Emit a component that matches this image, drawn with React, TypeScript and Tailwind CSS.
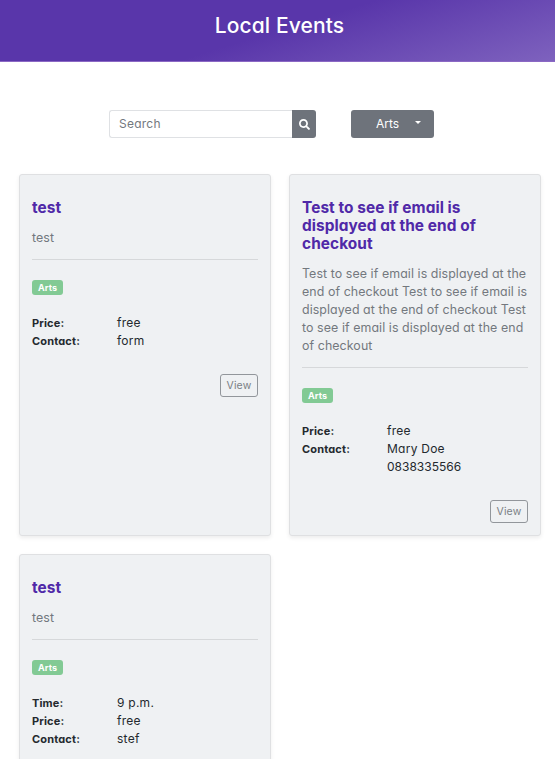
import React from "react";

type Row = { label: string; values: string[] };
type EventItem = { title: string[]; text: string[]; rows: Row[] };

const events: EventItem[] = [
  {
    title: ["test"],
    text: ["test"],
    rows: [
      { label: "Price:", values: ["free"] },
      { label: "Contact:", values: ["form"] },
    ],
  },
  {
    title: ["Test to see if email is", "displayed at the end of", "checkout"],
    text: [
      "Test to see if email is displayed at the",
      "end of checkout Test to see if email is",
      "displayed at the end of checkout Test",
      "to see if email is displayed at the end",
      "of checkout",
    ],
    rows: [
      { label: "Price:", values: ["free"] },
      { label: "Contact:", values: ["Mary Doe", "0838335566"] },
    ],
  },
  {
    title: ["test"],
    text: ["test"],
    rows: [
      { label: "Time:", values: ["9 p.m."] },
      { label: "Price:", values: ["free"] },
      { label: "Contact:", values: ["stef"] },
    ],
  },
];

function EventCard({ event }: { event: EventItem }) {
  return (
    <article className="flex flex-col rounded-[3px] border border-[#dfe0e2] bg-[#eff1f3] px-3 pt-6 pb-3 shadow-[0_2px_4px_rgba(0,0,0,0.075)]">
      <h2 className="text-[15.4px] leading-[18px] font-bold tracking-[0.07px] text-[#5029a8]">
        {event.title.map((line) => (
          <span key={line} className="block whitespace-nowrap">{line}</span>
        ))}
      </h2>
      <p className="mt-3 text-[12.4px] leading-[18px] tracking-[0.08px] text-[#73787e]">
        {event.text.map((line) => (
          <span key={line} className="block whitespace-nowrap">{line}</span>
        ))}
      </p>
      <hr className="mt-3 border-[#d6d8da]" />
      <span className="mt-5 h-[15px] w-[31px] rounded-[3px] bg-[#82ca94] text-center text-[9px] leading-[15px] font-bold tracking-[0.1px] text-white">
        Arts
      </span>
      <dl className="mt-[19px] text-[12px] leading-[18px] text-[#24292e]">
        {event.rows.map((row) => (
          <div key={row.label} className="flex">
            <dt className="w-[85px] pt-px text-[11px] leading-[17px] font-bold tracking-[0.15px]">{row.label}</dt>
            <dd>
              {row.values.map((v) => (
                <span key={v} className={/^\d+$/.test(v) ? "block" : "block tracking-[0.25px]"}>{v}</span>
              ))}
            </dd>
          </div>
        ))}
      </dl>
      <button className="mt-6 h-[23px] w-[38px] self-end rounded-[3px] border border-[#92969b] text-[10.5px] tracking-[0.15px] text-[#7a7f85]">
        View
      </button>
    </article>
  );
}

export default function App() {
  return (
    <div className="h-[759px] overflow-hidden bg-white font-['Inter','Open_Sans',sans-serif] [font-feature-settings:'cv11']">
      <header className="flex h-[62px] justify-center border-b border-[#8b68c4] bg-[linear-gradient(163deg,#5936aa_0%,#5936aa_50%,#7e62be_100%)] pt-[13px] pl-1">
        <h1 className="text-[21px] leading-[26px] font-medium tracking-[0.12px] text-white">Local Events</h1>
      </header>
      <div className="mt-12 ml-[109px] flex h-7">
        <div className="flex w-[183px] items-center rounded-l-[3px] border border-r-0 border-[#dfe1e4] pl-[9px] text-[12px] tracking-[0.25px] text-[#73787e]">
          Search
        </div>
        <button className="flex w-6 items-center justify-center rounded-r-[3px] bg-[#6e737b] text-white" aria-label="Search">
          <svg viewBox="0 0 512 512" className="size-[11px]" fill="currentColor">
            <path d="M505 442.7L405.3 343c-4.500-4.500-10.600-7-17-7H372c27.600-35.300 44-79.700 44-128C416 93.100 322.900 0 208 0S0 93.100 0 208s93.100 208 208 208c48.300 0 92.700-16.400 128-44v16.300c0 6.400 2.500 12.500 7 17l99.700 99.700c9.400 9.400 24.600 9.400 33.900 0l28.300-28.300c9.400-9.400 9.400-24.600.1-34zM208 336c-70.700 0-128-57.200-128-128 0-70.700 57.200-128 128-128 70.700 0 128 57.200 128 128 0 70.700-57.200 128-128 128z" />
          </svg>
        </button>
        <button className="ml-[35px] flex w-[83px] items-center rounded-[3px] bg-[#6e737b] pl-[25px] text-[12px] text-white">
          <span className="w-[39px] text-left">Arts</span>
          <span className="mb-[3px] h-0 w-0 border-x-[3.5px] border-t-[3.5px] border-x-transparent border-t-white" />
        </button>
      </div>
      <main className="mt-9 ml-[19px] grid w-[522px] grid-cols-2 gap-[18px]">
        {events.map((event, i) => (
          <EventCard key={i} event={event} />
        ))}
      </main>
    </div>
  );
}
